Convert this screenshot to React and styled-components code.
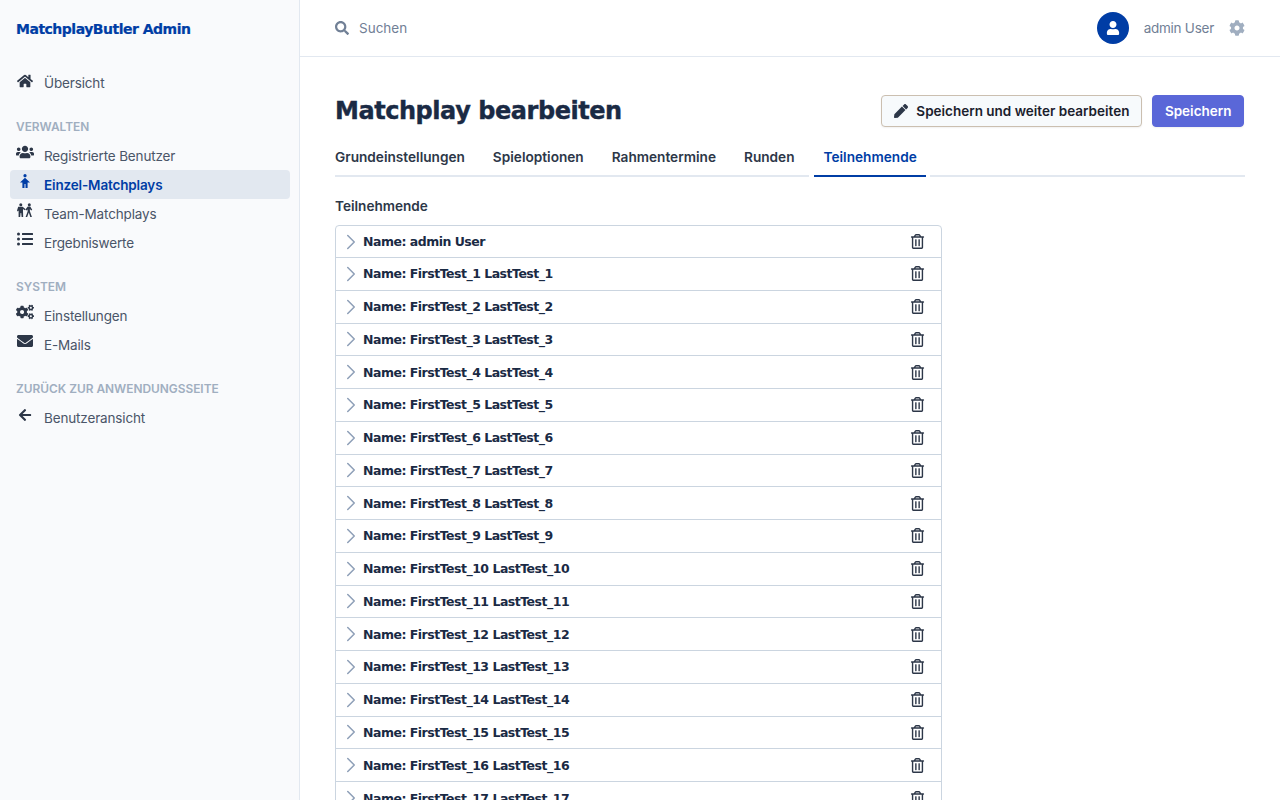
import React from 'react';
import styled, { createGlobalStyle } from 'styled-components';
import {
  FaHome, FaUsers, FaListUl, FaCogs, FaEnvelope,
  FaArrowLeft, FaPen, FaCog, FaUser, FaSearch, FaRegTrashAlt,
} from 'react-icons/fa';
import { ChevronRight } from 'lucide-react';

const Global = createGlobalStyle`
  html, body { margin: 0; height: 100%; overflow: hidden; }
  body { font-family: "Inter", "Liberation Sans", sans-serif; background: #fff; color: #1a202c; }
`;

const Layout = styled.div`
  display: flex;
  height: 800px;
`;
const Sidebar = styled.aside`
  width: 300px;
  flex: none;
  background: #f9fafc;
  border-right: 1px solid #e2e8f0;
  padding: 0 9px 0 10px;
  box-sizing: border-box;
`;
const Brand = styled.div`
  font-family: "DejaVu Sans", sans-serif;
  font-weight: 700;
  font-size: 14px;
  letter-spacing: -0.5px;
  -webkit-text-stroke: 0.2px #003da5;
  color: #003da5;
  padding: 21px 6px 0;
  height: 52px;
  box-sizing: border-box;
  white-space: nowrap;
`;
const NavGroup = styled.nav`
  margin-top: ${p => p.$top}px;
`;
const GroupTitle = styled.div`
  font-size: 11.9px;
  font-weight: 600;
  color: #a0aec0;
  text-transform: uppercase;
  padding: 0 6px;
  height: 24px;
  line-height: 20px;
`;
const NavItem = styled.a`
  display: flex;
  align-items: center;
  height: 29px;
  border-radius: 4px;
  padding: 0 6px;
  font-size: 13.5px;
  letter-spacing: -0.15px;
  color: ${p => (p.$active ? '#003da5' : '#4a5568')};
  font-weight: ${p => (p.$active ? 600 : 400)};
  background: ${p => (p.$active ? '#e2e8f0' : 'transparent')};
`;
const NavIcon = styled.span`
  width: 18px;
  margin-right: 10px;
  display: flex;
  justify-content: center;
  position: relative;
  top: ${p => p.$lift || -4}px;
  color: ${p => (p.$active ? '#003da5' : '#2d3748')};
  font-size: ${p => p.$size || 18}px;
`;
const Main = styled.main`
  flex: 1;
  min-width: 0;
`;
const TopBar = styled.header`
  height: 57px;
  box-sizing: border-box;
  border-bottom: 1px solid #e2e8f0;
  display: flex;
  align-items: center;
  padding: 0 35px;
`;
const Search = styled.div`
  display: flex;
  align-items: center;
  gap: 10px;
  flex: 1;
  color: #718096;
  font-size: 13.5px;
`;
const UserName = styled.span`
  color: #718096;
  font-size: 13.5px;
  letter-spacing: -0.25px;
  margin: 0 15px;
`;
const Avatar = styled.span`
  width: 32px;
  height: 32px;
  border-radius: 50%;
  background: #003da5;
  color: #fff;
  display: flex;
  align-items: center;
  justify-content: center;
  font-size: 14px;
`;
const Content = styled.div`
  padding: 38px 35px 0;
`;
const TitleRow = styled.div`
  display: flex;
  align-items: center;
  justify-content: space-between;
  height: 32px;
`;
const Title = styled.h1`
  margin: 0;
  font-family: "DejaVu Sans", sans-serif;
  font-weight: 700;
  font-size: 24px;
  letter-spacing: -0.45px;
  -webkit-text-stroke: 0.4px #1a2a44;
  color: #1a2a44;
`;
const Actions = styled.div`
  display: flex;
  gap: 10px;
  margin-right: 1px;
`;
const Button = styled.button`
  height: 32px;
  box-sizing: border-box;
  border-radius: 4px;
  font: 600 13.5px "Inter", sans-serif;
  display: flex;
  align-items: center;
  gap: 8px;
  padding: 0 ${p => (p.$primary ? '11.5px' : '12px')};
  border: 1px solid ${p => (p.$primary ? '#5a67d8' : '#cbbfb0')};
  background: ${p => (p.$primary ? '#5a67d8' : '#f7fafc')};
  color: ${p => (p.$primary ? '#fff' : '#1a202c')};
  box-shadow: 0 1px 2px rgba(0, 0, 0, 0.06);
`;
const Tabs = styled.div`
  display: flex;
  margin-top: 15px;
  height: 35px;
`;
const Tab = styled.div`
  padding: 5px 14px 0 ${p => (p.$first ? '0' : '14px')};
  line-height: 21px;
  box-sizing: border-box;
  font-size: 13.65px;
  font-weight: 600;
  color: #2d3748;
  border-bottom: 2px solid #e2e8f0;
`;
const ActiveTab = styled(Tab)`
  padding: 5px 9px 0 10px;
  margin: 0 4px 0 5px;
  color: #003da5;
  border-bottom-color: #003da5;
`;
const TabFill = styled.div`
  flex: 1;
  border-bottom: 2px solid #e2e8f0;
`;
const SectionLabel = styled.div`
  margin-top: 19px;
  font-size: 13.6px;
  font-weight: 600;
  color: #2d3748;
  height: 20px;
  line-height: 20px;
`;
const List = styled.div`
  margin-top: 9px;
  width: 607px;
  border: 1px solid #cbd5e0;
  border-radius: 4px;
  box-sizing: border-box;
`;
const Row = styled.div`
  height: 32.75px;
  box-sizing: border-box;
  border-bottom: 1px solid #cbd5e0;
  display: flex;
  align-items: center;
  padding: 0 16px 0 2px;
  &:first-child { height: 32px; }
  &:last-child { border-bottom: 0; }
`;
const RowName = styled.span`
  flex: 1;
  margin-left: -1px;
  font-family: "DejaVu Sans", sans-serif;
  font-weight: 700;
  font-size: 12.5px;
  letter-spacing: -0.5px;
  color: #1a2a44;
`;
const Trash = styled.span`
  color: #2d3748;
  font-size: 15px;
  display: flex;
`;

const names = ['admin User'];
for (let i = 1; i <= 17; i++) names.push(`FirstTest_${i} LastTest_${i}`);

function SingleIcon() {
  return (
    <svg width="10" height="14" viewBox="0 0 10 14" fill="currentColor">
      <circle cx="5" cy="1.7" r="1.6" />
      <path d="M5 3.8l5 4.7H7.6V14H5.5v-4h-1v4H2.4V8.5H0z" />
    </svg>
  );
}

function TeamIcon() {
  return (
    <svg width="16" height="14" viewBox="0 0 16 14" fill="currentColor">
      <circle cx="3.8" cy="1.7" r="1.5" />
      <circle cx="12.3" cy="1.7" r="1.5" />
      <path d="M1.2 3.8h4.4l3 2.4-.9 1-1.7-1.2v2.6l.2 5.4H4.6L4.2 10h-.6l-.4 4H1.6V7.6L.6 8.4 0 7.4z" />
      <path d="M10.8 3.6h2.4l2 3.2-1 .7-1.3-1.6v2.4L14.9 14h-1.6l-1.5-4.4L10.2 14H8.6l2-5.6V6.4L9.2 7.6l-.8-1z" />
    </svg>
  );
}

export default function App() {
  return (
    <Layout>
      <Global />
      <Sidebar>
        <Brand>MatchplayButler Admin</Brand>
        <NavGroup $top={16}>
          <NavItem><NavIcon $size={16} $lift={-2}><FaHome /></NavIcon>Übersicht</NavItem>
        </NavGroup>
        <NavGroup $top={20}>
          <GroupTitle>Verwalten</GroupTitle>
          <NavItem><NavIcon><FaUsers /></NavIcon>Registrierte Benutzer</NavItem>
          <NavItem $active><NavIcon $active><SingleIcon /></NavIcon>Einzel-Matchplays</NavItem>
          <NavItem><NavIcon><TeamIcon /></NavIcon>Team-Matchplays</NavItem>
          <NavItem><NavIcon $size={16}><FaListUl /></NavIcon>Ergebniswerte</NavItem>
        </NavGroup>
        <NavGroup $top={20}>
          <GroupTitle>System</GroupTitle>
          <NavItem><NavIcon><FaCogs /></NavIcon>Einstellungen</NavItem>
          <NavItem><NavIcon $size={16}><FaEnvelope /></NavIcon>E-Mails</NavItem>
        </NavGroup>
        <NavGroup $top={20}>
          <GroupTitle>Zurück zur Anwendungsseite</GroupTitle>
          <NavItem><NavIcon $size={14} $lift={-3}><FaArrowLeft /></NavIcon>Benutzeransicht</NavItem>
        </NavGroup>
      </Sidebar>
      <Main>
        <TopBar>
          <Search><FaSearch size={14} />Suchen</Search>
          <Avatar><FaUser /></Avatar>
          <UserName>admin User</UserName>
          <FaCog size={16} color="#a0aec0" />
        </TopBar>
        <Content>
          <TitleRow>
            <Title>Matchplay bearbeiten</Title>
            <Actions>
              <Button><FaPen size={14} color="#2d3748" />Speichern und weiter bearbeiten</Button>
              <Button $primary>Speichern</Button>
            </Actions>
          </TitleRow>
          <Tabs>
            <Tab $first>Grundeinstellungen</Tab>
            <Tab>Spieloptionen</Tab>
            <Tab>Rahmentermine</Tab>
            <Tab>Runden</Tab>
            <ActiveTab>Teilnehmende</ActiveTab>
            <TabFill />
          </Tabs>
          <SectionLabel>Teilnehmende</SectionLabel>
          <List>
            {names.map(n => (
              <Row key={n}>
                <ChevronRight size={26} color="#8fa0b8" strokeWidth={1.4} />
                <RowName>Name: {n}</RowName>
                <Trash><FaRegTrashAlt /></Trash>
              </Row>
            ))}
          </List>
        </Content>
      </Main>
    </Layout>
  );
}
